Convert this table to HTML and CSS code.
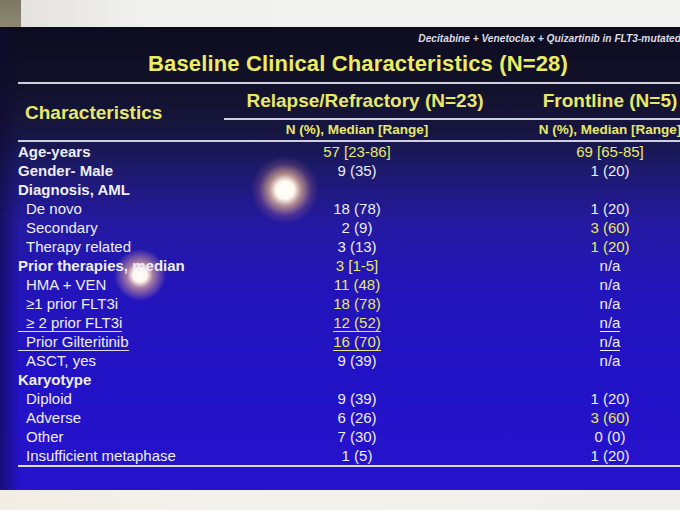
FILE: index.html
```html
<!DOCTYPE html>
<html lang="en">
<head>
<meta charset="utf-8">
<title>Baseline Clinical Characteristics</title>
<link rel="stylesheet" href="styles.css">
</head>
<body>
<div class="photo">
  <div class="wall"><div class="wall-corner"></div><div class="wall-rest"></div></div>
  <div class="slide">
    <div class="subtitle">Decitabine + Venetoclax + Quizartinib in FLT3-mutated</div>
    <h1 class="title">Baseline Clinical Characteristics (N=28)</h1>
    <div class="rule"></div>
    <div class="head">
      <div class="head-char">Characteristics</div>
      <div class="head-group head-rr">Relapse/Refractory (N=23)</div>
      <div class="head-group">Frontline (N=5)</div>
      <div class="head-sub">N (%), Median [Range]</div>
      <div class="head-sub">N (%), Median [Range]</div>
    </div>
    <div class="rows">
      <div class="lab grp"><span>Age-years</span></div><div class="val yel">57 [23-86]</div><div class="val yel">69 [65-85]</div>
      <div class="lab grp"><span>Gender- Male</span></div><div class="val">9 (35)</div><div class="val">1 (20)</div>
      <div class="lab grp"><span>Diagnosis, AML</span></div><div class="val"></div><div class="val"></div>
      <div class="lab sub"><span>De novo</span></div><div class="val">18 (78)</div><div class="val">1 (20)</div>
      <div class="lab sub"><span>Secondary</span></div><div class="val">2 (9)</div><div class="val yel">3 (60)</div>
      <div class="lab sub"><span>Therapy related</span></div><div class="val">3 (13)</div><div class="val yel">1 (20)</div>
      <div class="lab grp"><span>Prior therapies, median</span></div><div class="val yel">3 [1-5]</div><div class="val">n/a</div>
      <div class="lab sub"><span>HMA + VEN</span></div><div class="val yel">11 (48)</div><div class="val">n/a</div>
      <div class="lab sub"><span>≥1 prior FLT3i</span></div><div class="val yel">18 (78)</div><div class="val">n/a</div>
      <div class="lab sub"><span class="ul">≥ 2 prior FLT3i</span></div><div class="val yel"><span class="ulv">12 (52)</span></div><div class="val"><span class="ulv">n/a</span></div>
      <div class="lab sub"><span class="ul">Prior Gilteritinib</span></div><div class="val yel"><span class="ulv">16 (70)</span></div><div class="val"><span class="ulv">n/a</span></div>
      <div class="lab sub"><span>ASCT, yes</span></div><div class="val">9 (39)</div><div class="val">n/a</div>
      <div class="lab grp"><span>Karyotype</span></div><div class="val"></div><div class="val"></div>
      <div class="lab sub"><span>Diploid</span></div><div class="val">9 (39)</div><div class="val">1 (20)</div>
      <div class="lab sub"><span>Adverse</span></div><div class="val">6 (26)</div><div class="val yel">3 (60)</div>
      <div class="lab sub"><span>Other</span></div><div class="val">7 (30)</div><div class="val">0 (0)</div>
      <div class="lab sub"><span>Insufficient metaphase</span></div><div class="val">1 (5)</div><div class="val">1 (20)</div>
    </div>
  </div>
  <div class="floor"></div>
</div>
</body>
</html>
```
FILE: styles.css
```css
html, body {
  margin: 0;
  padding: 0;
  background: #efeeea;
}
body {
  font-family: "Liberation Sans", Arial, sans-serif;
}
.photo {
  width: 680px;
  height: 510px;
  overflow: hidden;
  display: flex;
  flex-direction: column;
}
.wall {
  height: 27px;
  flex: none;
  display: flex;
}
.wall-corner {
  width: 21px;
  background: linear-gradient(180deg, #7d7863 0%, #8d8874 100%);
}
.wall-rest {
  flex: 1;
  background: linear-gradient(90deg, #e4e3df 0%, #f1f1ef 20%, #f3f3f1 100%);
}
.slide {
  flex: none;
  width: 730px;
  height: 463px;
  box-sizing: border-box;
  padding: 6px 0 0 18px;
  background:
    radial-gradient(circle at 285px 163px, #ffffff 0, #fffaf0 9px, rgba(255, 200, 150, 0.65) 16px, rgba(255, 150, 140, 0.18) 26px, rgba(255, 150, 140, 0) 34px),
    radial-gradient(circle at 140px 248px, #ffffff 0, #fff6ee 7px, rgba(255, 190, 150, 0.6) 13px, rgba(255, 150, 140, 0) 26px),
    linear-gradient(90deg, rgba(15, 8, 50, 0.55) 0, rgba(15, 8, 50, 0) 20px),
    linear-gradient(180deg, #0d0c1f 0%, #111129 12%, #16153e 22%, #1c1a68 30%, #2419a0 42%, #2315b8 55%, #2212c6 75%, #2513cc 100%);
}
.subtitle {
  font-size: 10.2px;
  line-height: 12px;
  font-weight: bold;
  font-style: italic;
  color: #dcdce6;
  text-align: right;
  padding-right: 49px;
}
.title {
  margin: 6px 0 0 0;
  font-size: 22px;
  line-height: 26px;
  font-weight: bold;
  color: #ecec62;
  text-align: center;
  padding-right: 32px;
  letter-spacing: 0.15px;
}
.rule {
  margin-top: 5px;
  height: 2px;
  background: #cfcfdc;
}
.head {
  display: grid;
  grid-template-columns: 206px 266px 240px;
  grid-template-rows: 36px 20px;
  border-bottom: 2px solid #cfcfe0;
  color: #e8e868;
  font-weight: bold;
}
.head-char {
  grid-row: 1 / 3;
  align-self: center;
  font-size: 19px;
  padding-left: 7px;
  padding-top: 1px;
}
.head-group {
  font-size: 19px;
  line-height: 34px;
  text-align: center;
  border-bottom: 2px solid #cfcfe0;
}
.head-rr {
  padding-left: 16px;
}
.head-sub {
  font-size: 13.5px;
  line-height: 20px;
  text-align: center;
}
.rows {
  display: grid;
  grid-template-columns: 206px 266px 240px;
  grid-auto-rows: 19px;
  border-bottom: 2px solid #dcdcea;
  color: #eeeef6;
  font-size: 15px;
  line-height: 19px;
}
.lab {
  white-space: nowrap;
}
.grp {
  font-weight: bold;
}
.sub span {
  padding-left: 8px;
}
.ul {
  display: inline-block;
  line-height: 16px;
  border-bottom: 1.5px solid #dcdcea;
}
.val {
  text-align: center;
  white-space: nowrap;
}
.ulv {
  display: inline-block;
  line-height: 16px;
  border-bottom: 1.5px solid currentColor;
}
.yel {
  color: #e8e86a;
}
.floor {
  flex: 1;
  background: linear-gradient(90deg, #f2ede4 0%, #f3f1ec 30%, #f0efeb 100%);
}
```
